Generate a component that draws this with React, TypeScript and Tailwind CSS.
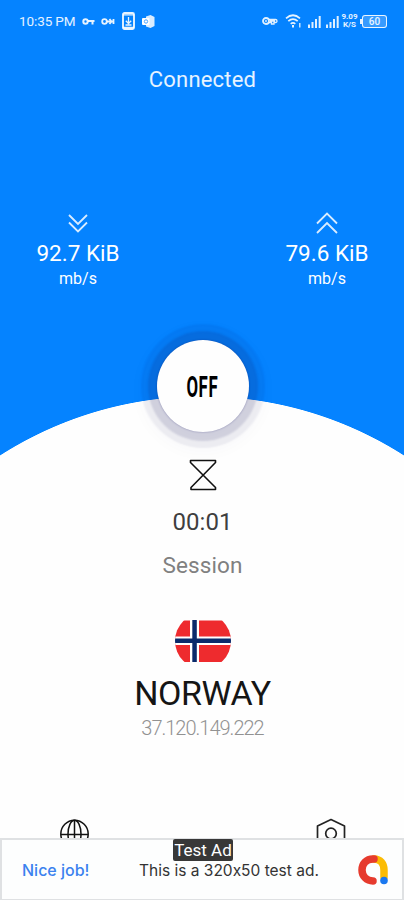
import React from 'react'

interface SpeedProps {
  value: string;
  up?: boolean;
}

const Signal = () => (
  <svg className="h-[13px] w-[13px]" viewBox="0 0 13 13" fill="#fff" fillOpacity=".88">
    <path d="M0 9.5h2V13H0zM3.5 7h2v6h-2zM7 4h2v9H7zM10.7 1h2v12h-2z" />
  </svg>
)

const StatusBar = () => (
  <div className="flex h-[42px] items-center pl-[19px] pr-[17px] text-white/90">
    <span className="w-[63px] whitespace-nowrap pt-px text-[13.5px] tracking-[-0.1px]">10:35 PM</span>
    <svg className="h-[9px] w-[13px]" viewBox="0 0 13 9" fill="none" stroke="#fff" strokeOpacity=".9">
      <circle cx="3.5" cy="4.5" r="2.2" strokeWidth="2" />
      <path d="M6 4h6.5M10.5 4v3.5" strokeWidth="2" />
    </svg>
    <svg className="ml-[6px] h-[9px] w-[14px]" viewBox="0 0 14 9" fill="none" stroke="#fff" strokeOpacity=".9">
      <circle cx="3.5" cy="4.5" r="2.3" strokeWidth="1.8" />
      <path d="M6 4.5h7M8.500 2l2 2.500-2 2.500M12.500 2v5" strokeWidth="1.8" />
    </svg>
    <svg className="ml-[7px] h-[18px] w-[13px]" viewBox="0 0 13 18" fill="none" stroke="#fff" strokeOpacity=".9">
      <rect x="1" y="1" width="11" height="16" rx="1.5" strokeWidth="1.9" />
      <path d="M1 2.800h11M1 15.500h11M6.5 5v6.500M3.8 8.800l2.700 2.700 2.700-2.700M3.500 13h6" strokeWidth="1.3" />
    </svg>
    <svg className="ml-[7px] h-[13px] w-[13px]" viewBox="0 0 13 13">
      <path d="M4 1.500 8.500 0l4 2v9l-4 2L4 11.500z" fill="#fff" fillOpacity=".85" />
      <rect y="3" width="7.500" height="7" rx="1" fill="#fff" />
      <circle cx="4" cy="6.500" r="1.700" fill="none" stroke="#4aa3ff" />
    </svg>
    <svg className="ml-auto h-[10px] w-[16px]" viewBox="0 0 16 10" fill="none" stroke="#fff" strokeOpacity=".88">
      <circle cx="4" cy="5" r="3" strokeWidth="1.800" />
      <circle cx="4" cy="5" r=".6" />
      <path d="M7 3.500h6.500c2 0 2 3 0 3H12V8H9.500V6.500H7M8 5h5" strokeWidth="1.300" />
    </svg>
    <svg className="ml-[7px] h-[14px] w-[17px]" viewBox="0 0 17 14" fill="none" stroke="#fff" strokeOpacity=".9" strokeWidth="1.700">
      <path d="M1 4.300Q8 -1.800 15 4.300M3.300 7.200Q8 3 12.700 7.200M5.700 9.800Q8 8 10.300 9.800" />
      <path d="M8 11v2.500" strokeWidth="2" />
      <path d="M14.800 9v4.500" strokeWidth="1.300" />
    </svg>
    <div className="ml-[6px] flex gap-[5px]">
      <Signal />
      <Signal />
    </div>
    <div className="ml-[2px] w-[17px] text-center text-[8px] font-bold leading-[8px]">
      9.09
      <br />
      K/S
    </div>
    <div className="ml-[2px] h-[5px] w-[2px] bg-white/90" />
    <div className="flex h-[13px] w-[25px] items-center justify-center rounded-[3px] border-[1.500px] border-white/90 bg-white/20 pt-px text-[10px] font-medium leading-none">
      60
    </div>
  </div>
)

const Speed = ({ value, up }: SpeedProps) => (
  <div className="flex w-[156px] flex-col items-center text-white">
    <svg className="h-[22px] w-[24px]" viewBox="0 0 24 22" fill="none" stroke="#fff" strokeOpacity=".85" strokeWidth="1.800">
      {up ? (
        <path d="M2 11.500l10-10 10 10M2 21l10-10 10 10" />
      ) : (
        <path d="M3 3l9 9 9-9M3 10.500l9 9 9-9" />
      )}
    </svg>
    <span className="mt-[5px] text-[22.5px] leading-[28px]">{value}</span>
    <span className="mt-[2px] text-[16px] leading-[20px]">mb/s</span>
  </div>
)

const AdBanner = () => (
  <div className="relative flex h-[62px] items-center border-2 border-b-1 border-[#dfe1e3] bg-[#fdfefe] pl-[20px] pr-[13px] font-['Inter',sans-serif]">
    <span className="w-[117px] whitespace-nowrap text-[16px] font-medium text-[#3b82ef]">Nice job!</span>
    <span className="whitespace-nowrap pt-[2px] text-[15.5px] text-[#333] [font-feature-settings:'calt'_0]">
      This is a 320x50 test ad.
    </span>
    <svg className="ml-auto h-[32px] w-[32px]" viewBox="0 0 32 32" fill="none" strokeWidth="7.500" strokeLinecap="round">
      <path d="M17 5c6.500 0 10 5 10 11v7" stroke="#fbbc04" />
      <path d="M17 5C9 4.500 5 10 5 16s4.500 11 11 11" stroke="#e63b2e" />
      <circle cx="27" cy="26.500" r="3.800" fill="#1a78f0" />
    </svg>
    <div className="absolute left-[171px] top-[-1px] flex h-[22px] w-[60px] items-center justify-center rounded-[2px] bg-[#383838] pt-px font-['Roboto',sans-serif] text-[17px] text-white">
      Test Ad
    </div>
  </div>
)

const App = () => {
  return (
    <main className="flex h-[900px] w-[404px] flex-col overflow-hidden bg-[#fefefe] font-['Roboto',sans-serif]">
      <section className="h-[456px] shrink-0 bg-[radial-gradient(circle_375px_at_202px_771px,#fefefe_99.8%,#0583ff_100%)]">
        <StatusBar />
        <h1 className="mt-[24px] pl-px text-center text-[22px] leading-[28px] tracking-[0.2px] text-white/90">Connected</h1>
        <div className="-mr-px mt-[118px] flex justify-between">
          <Speed value="92.7 KiB" />
          <Speed value="79.6 KiB" up />
        </div>
        <div className="mt-[51px] flex justify-center pl-px">
          <button className="flex h-[92px] w-[92px] items-center justify-center rounded-full bg-[#fefefe] shadow-[0_0_2px_0_rgba(20,20,100,0.4),0_0_2px_9px_rgba(20,20,90,0.13),0_0_2px_16px_rgba(20,20,90,0.06),0_4px_14px_18px_rgba(20,20,90,0.02)]">
            <span className="scale-x-[0.56] pt-px text-[30px] font-bold leading-none tracking-[1px] text-black">OFF</span>
          </button>
        </div>
      </section>

      <section className="flex flex-1 flex-col items-center pl-px">
        <svg className="mt-[3px] h-[32px] w-[28px]" viewBox="0 0 28 32" fill="none" stroke="#111" strokeWidth="1.600" strokeLinejoin="round">
          <path d="M1.500 1.500h25v2L2 28.500v2h24.500v-2L1.500 3.500z" />
        </svg>
        <span className="mt-[17px] text-[24px] leading-[28px] text-[#3f3f3f]">00:01</span>
        <span className="mt-[15px] text-[22.5px] leading-[28px] tracking-[0.1px] text-[#808080]">Session</span>
        <svg className="mt-[41px] h-[42px] w-[56px]" viewBox="0 0 56 42">
          <clipPath id="round">
            <circle cx="28" cy="21" r="28" />
          </clipPath>
          <g clipPath="url(#round)">
            <path fill="#ee2b2e" d="M0 0.500h56V42H0z" />
            <path fill="#fff" d="M15 0h9v42h-9zM0 16.500h56v8.500H0z" />
            <path fill="#0a2a6b" d="M17.300 0h4.500v42h-4.500zM0 18.600h56v4.300H0z" />
          </g>
        </svg>
        <span className="mt-[11px] text-[34px] leading-[40px] tracking-[-0.400px] text-[#151515]">NORWAY</span>
        <span className="mt-[3px] text-[20px] font-light leading-[24px] tracking-[-1px] text-[#929292]">37.120.149.222</span>
      </section>

      <nav className="flex h-[20px] shrink-0 justify-between overflow-hidden pl-[60px] pr-[58px]">
        <svg className="mt-[1px] h-[30px] w-[30px] shrink-0" viewBox="0 0 30 30" fill="none" stroke="#111" strokeWidth="1.500">
          <circle cx="14.500" cy="15" r="13.700" />
          <ellipse cx="14.500" cy="15" rx="6.500" ry="13.700" />
          <path d="M14.500 1v28M1 15.500h27" />
        </svg>
        <svg className="h-[32px] w-[30px] shrink-0" viewBox="0 0 30 32" fill="none" stroke="#222" strokeWidth="1.700" strokeLinejoin="round">
          <path d="M15 1.500 28.500 8v16L15 31 1.500 24V8z" />
          <circle cx="15" cy="15.500" r="5.300" />
        </svg>
      </nav>
      <AdBanner />
    </main>
  )
}

export default App
